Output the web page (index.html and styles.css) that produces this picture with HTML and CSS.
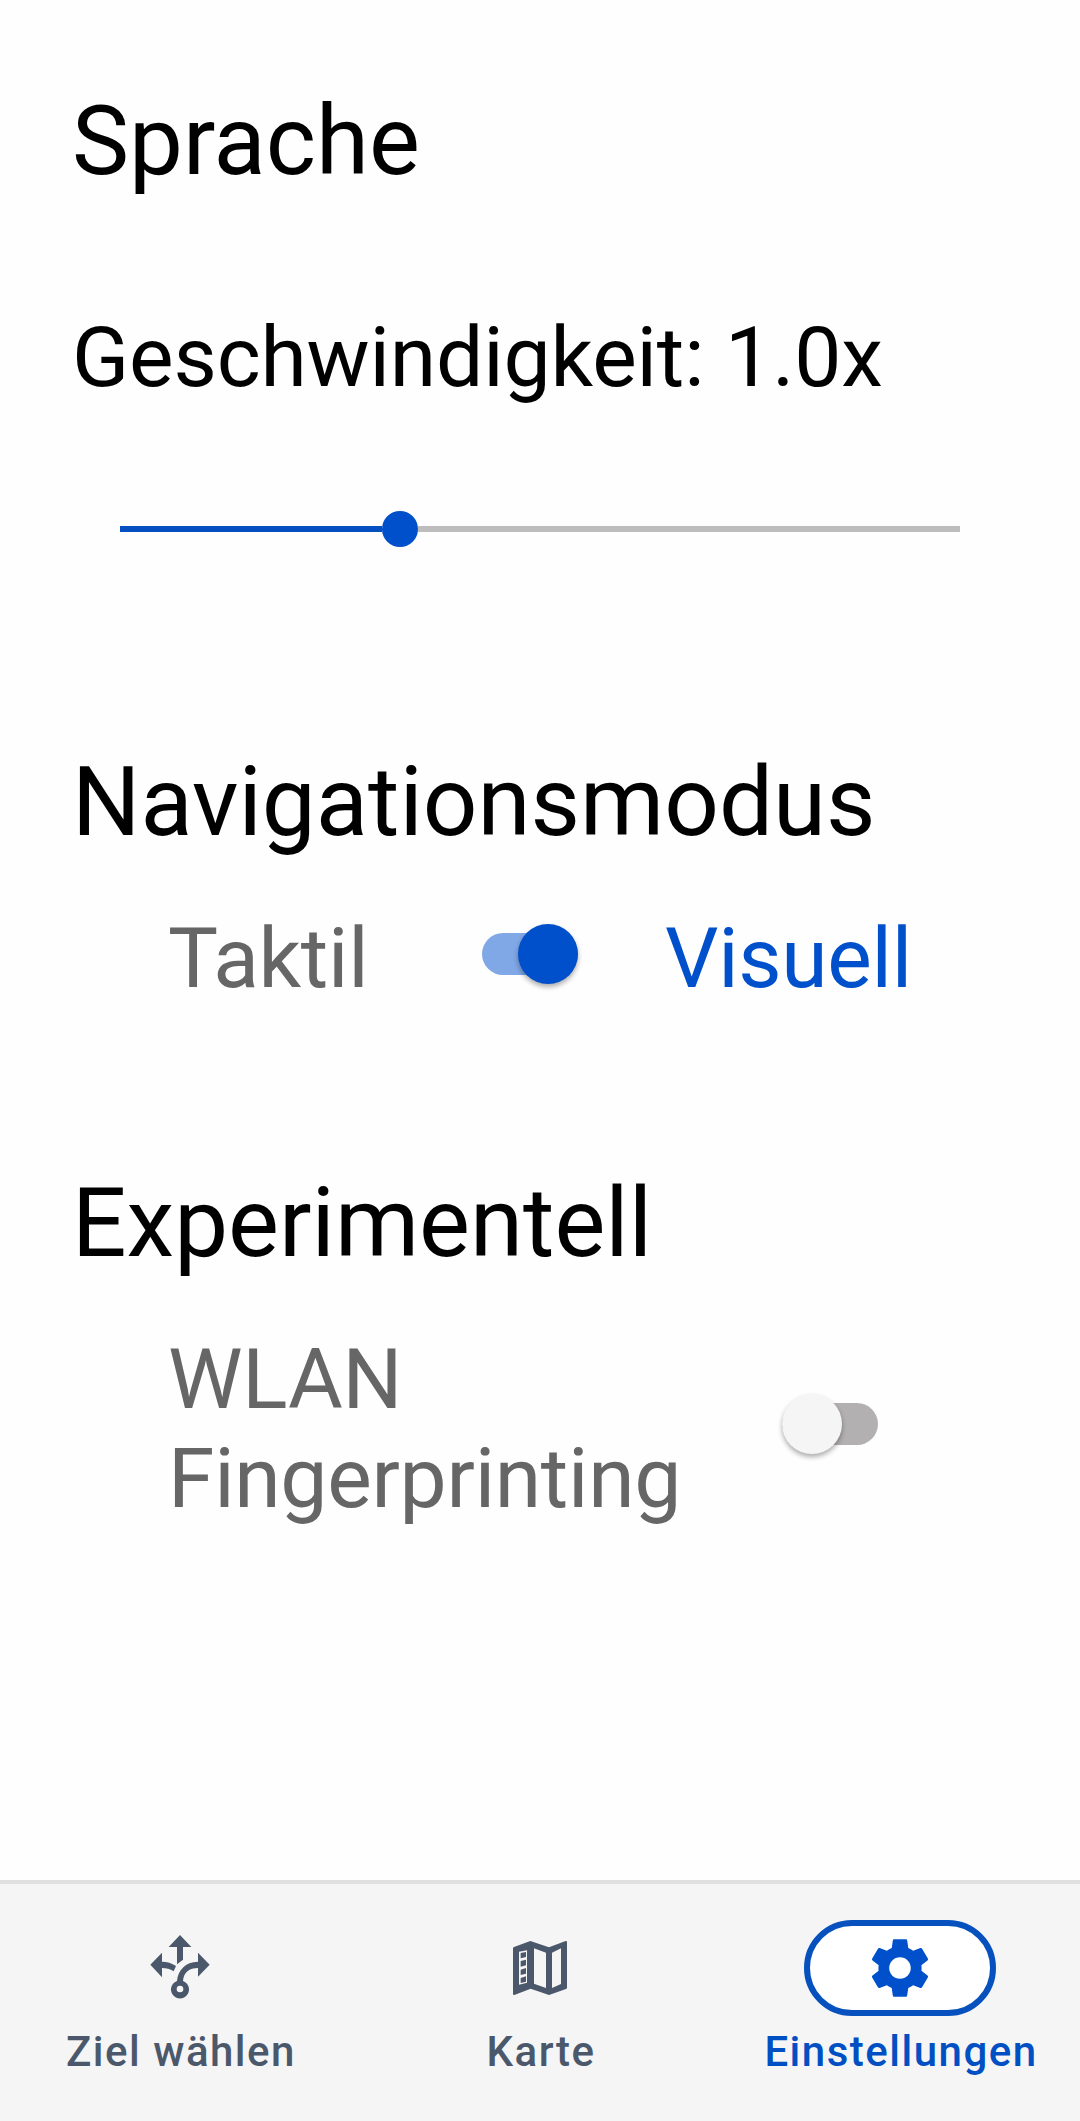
FILE: index.html
```html
<!DOCTYPE html>
<html lang="de">
<head>
<meta charset="utf-8">
<title>Einstellungen</title>
<link rel="stylesheet" href="styles.css">
</head>
<body>
<div class="app">
  <main class="settings">
    <h1 class="heading">Sprache</h1>
    <p class="speed">Geschwindigkeit: 1.0x</p>
    <div class="slider">
      <span class="slider-fill"></span>
      <span class="slider-thumb"></span>
      <span class="slider-rest"></span>
    </div>
    <h1 class="heading heading-mode">Navigationsmodus</h1>
    <div class="row">
      <span class="option option-tactile">Taktil</span>
      <span class="switch switch-on"><span class="knob"></span></span>
      <span class="option option-active">Visuell</span>
    </div>
    <h1 class="heading heading-experimental">Experimentell</h1>
    <div class="row row-wifi">
      <span class="option option-wifi">WLAN<br>Fingerprinting</span>
      <span class="switch"><span class="knob"></span></span>
    </div>
  </main>
  <nav class="tabs">
    <a class="tab">
      <span class="pill">
        <svg class="icon" viewBox="0 0 300 300" fill="currentColor">
          <path d="M150 75L184 111H159V149L141 163V111H116Z"/>
          <path d="M61 164L96 128V155Q119 155 138 168L131 184Q115 174 96 174V202Z"/>
          <path d="M239 164L204 128V155C166 156 144 180 141 213A27 27 0 1 0 159 213C161 187 178 174 204 174V200ZM150 227A10 10 0 1 1 150 247A10 10 0 1 1 150 227Z" fill-rule="evenodd"/>
        </svg>
      </span>
      <span class="label">Ziel wählen</span>
    </a>
    <a class="tab">
      <span class="pill">
        <svg class="icon" viewBox="0 0 300 300">
          <path fill="currentColor" fill-rule="evenodd" d="M72 111L121 93L177 112L227 93Q231 92 231 97V233Q231 236 228 237L177 255L122 236L73 255Q69 256 69 251V115Q69 112 72 111ZM132 115V221L168 234V128ZM186 128V234L213 222V115Z"/>
          <path fill="#f5f5f5" d="M87 125L111 121V218L87 224Z"/>
          <path fill="currentColor" d="M92 129L108 126V141L92 145ZM92 153L108 149V166L92 170ZM92 179L108 174V191L92 195ZM92 204L108 199V215L92 219Z"/>
        </svg>
      </span>
      <span class="label">Karte</span>
    </a>
    <a class="tab tab-active">
      <span class="pill">
        <svg class="gear" viewBox="0 0 24 24" fill="currentColor">
          <path d="M19.14 12.94c.04-.3.06-.61.06-.94 0-.32-.02-.64-.07-.94l2.03-1.58c.18-.14.23-.41.12-.61l-1.92-3.32c-.12-.22-.37-.29-.59-.22l-2.39.96c-.5-.38-1.03-.7-1.62-.94l-.36-2.54c-.04-.24-.24-.41-.48-.41h-3.84c-.24 0-.43.17-.47.41l-.36 2.54c-.59.24-1.13.57-1.62.94l-2.39-.96c-.22-.08-.47 0-.59.22L2.74 8.87c-.12.21-.08.47.12.61l2.03 1.58c-.05.3-.09.63-.09.94s.02.64.07.94l-2.03 1.58c-.18.14-.23.41-.12.61l1.92 3.32c.12.22.37.29.59.22l2.39-.96c.5.38 1.03.7 1.62.94l.36 2.54c.05.24.24.41.48.41h3.84c.24 0 .44-.17.47-.41l.36-2.54c.59-.24 1.13-.56 1.62-.94l2.39.96c.22.08.47 0 .59-.22l1.92-3.32c.12-.22.07-.47-.12-.61l-2.01-1.58zM12 15.6c-1.98 0-3.6-1.62-3.6-3.6s1.62-3.6 3.6-3.6 3.6 1.62 3.6 3.6-1.62 3.6-3.6 3.6z"/>
        </svg>
      </span>
      <span class="label">Einstellungen</span>
    </a>
  </nav>
</div>
</body>
</html>
```
FILE: styles.css
```css
* {
  box-sizing: border-box;
}

body {
  margin: 0;
  background: #fefefe;
  color: #000;
  font-family: Roboto, "Liberation Sans", sans-serif;
}

.app {
  display: flex;
  flex-direction: column;
  height: 2121px;
}

.settings {
  flex: 1;
  padding: 85px 72px 0;
}

.heading {
  margin: 0;
  font-size: 96px;
  font-weight: 400;
  line-height: 112px;
}

.speed {
  margin: 112px 0 0;
  font-size: 84px;
  line-height: 98px;
  letter-spacing: -0.15px;
}

.slider {
  display: flex;
  align-items: center;
  height: 36px;
  margin: 104px 48px 0;
}

.slider-fill {
  width: 262px;
  height: 6px;
  background: #0550c0;
}

.slider-thumb {
  width: 36px;
  height: 36px;
  border-radius: 50%;
  background: #0050cc;
}

.slider-rest {
  flex: 1;
  height: 6px;
  background: #bdbdbd;
}

.heading-mode {
  margin-top: 199px;
}

.row {
  display: flex;
  align-items: center;
  margin-top: 52px;
  padding-left: 96px;
}

.option {
  color: #666;
  font-size: 84px;
  line-height: 98px;
  letter-spacing: -0.3px;
}

.option-tactile {
  width: 314px;
}

.option-active {
  margin-left: 87px;
  color: #0050cc;
}

.switch {
  display: flex;
  align-items: center;
  width: 96px;
  height: 42px;
  margin-top: -10px;
  border-radius: 21px;
  background: #b2b0b1;
}

.switch-on {
  justify-content: flex-end;
  background: #80a7e6;
}

.knob {
  flex: none;
  width: 60px;
  height: 60px;
  border-radius: 50%;
  background: #f5f5f5;
  box-shadow: 0 3px 5px rgba(0, 0, 0, 0.32);
}

.switch-on .knob {
  background: #0050cc;
}

.heading-experimental {
  margin-top: 159px;
}

.row-wifi {
  margin-top: 51px;
}

.option-wifi {
  width: 614px;
  line-height: 99px;
}

.tabs {
  display: grid;
  grid-template-columns: repeat(3, 1fr);
  height: 241px;
  padding-top: 36px;
  border-top: 4px solid #e0e0e0;
  background: #f5f5f5;
}

.tab {
  display: flex;
  flex-direction: column;
  align-items: center;
  color: #4b586b;
}

.tab-active {
  color: #0050c4;
}

.pill {
  display: flex;
  align-items: center;
  justify-content: center;
  width: 192px;
  height: 96px;
}

.tab-active .pill {
  border: 6px solid #0751be;
  border-radius: 48px;
  background: #fff;
  color: #0050cc;
}

.icon {
  flex: none;
  width: 100px;
  height: 100px;
  margin-top: -16px;
}

.gear {
  width: 72px;
  height: 72px;
}

.label {
  margin-top: 11px;
  padding-left: 2px;
  font-size: 42px;
  font-weight: 500;
  line-height: 50px;
  letter-spacing: 1.5px;
}
```
